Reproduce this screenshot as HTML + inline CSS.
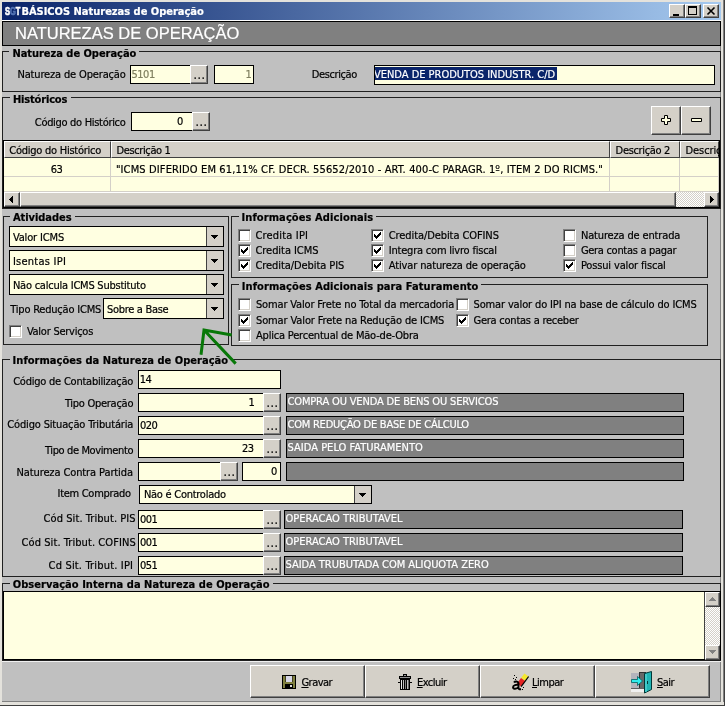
<!DOCTYPE html>
<html><head><meta charset="utf-8"><title>BÁSICOS Naturezas de Operação</title>
<style>
*{box-sizing:border-box;margin:0;padding:0}
html,body{width:725px;height:706px;overflow:hidden;background:#c0c0c0}
body{position:relative;will-change:transform;-webkit-text-stroke:0.2px;font-family:"DejaVu Sans Condensed","Liberation Sans",sans-serif;font-size:11px;color:#000;line-height:13px}
.a{position:absolute;white-space:nowrap}
.b{font-weight:bold}
.titlebar{left:2px;top:2px;width:720px;height:18px;background:linear-gradient(90deg,#0a246a,#a6caf0)}
.wl{left:2px;top:20px;width:719px;height:1px;background:#fff}
.band{left:2px;top:21px;width:719px;height:25px;background:#808080;border:1px solid #000}
.bandt{left:15px;top:22px;color:#fff;font-size:16.5px;line-height:22px;font-family:"Liberation Sans",sans-serif}
.gb{border:1px solid #202020}
.gap{background:#c0c0c0}
.inp{background:#ffffe1;border:1px solid #000}
.dis{color:#808060}
.btn{background:#d4d0c8;border:1px solid;border-color:#fff #404040 #404040 #fff;box-shadow:inset -1px -1px 0 #808080;text-align:center}
.eb{line-height:19px;font-size:12px;letter-spacing:0.57px;padding-left:1px}
.ro{background:#808080;border:1px solid #000}
.cb{background:#fff;border:1px solid;border-color:#808080 #fff #fff #808080;box-shadow:inset 1px 1px 0 #404040,inset -1px -1px 0 #d4d0c8}
.cb svg{position:absolute;left:2px;top:2px}
.combo{background:#ffffe1;border:1px solid #000}
.dd{position:absolute;right:0;top:0;bottom:0;width:17px;background:#d4d0c8;border-left:1px solid #404040}
.dd svg{position:absolute;left:4px;top:50%;margin-top:-2px}
.sel{position:absolute;background:#0a246a}
.grid{background:#ffffe1;border:1px solid #000}
.gh{background:#d4d0c8;border:1px solid;border-color:#fff #404040 #404040 #fff}
.gc{border-right:1px solid #d4d0c8;border-bottom:1px solid #d4d0c8}
.track{background:#e9e7e3 repeating-conic-gradient(#fff 0% 25%,#d4d0c8 0% 50%) 0 0/2px 2px}
.ta{background:#ffffe1;border:1px solid #000}
.wb{width:16px;height:14px}
.arr{position:absolute;left:3px;top:4px}
</style></head><body>
<div class="a titlebar"></div>
<div class="a b" style="left:5px;top:5px;color:#fff;font-family:'Liberation Sans',sans-serif;font-size:11px;line-height:13px;transform:scaleX(0.68);transform-origin:0 0;-webkit-text-stroke:0.7px #fff">S<span style="color:#5474b4;-webkit-text-stroke:0.7px #5474b4">G</span>T</div>
<div class="a wl"></div>
<div class="a b" style="left:21.4px;top:5px;letter-spacing:-0.01px;color:#fff">BÁSICOS Naturezas de Operação</div>
<div class="a btn wb" style="left:669px;top:4px"><i style="position:absolute;left:3px;top:9px;width:6px;height:2px;background:#000"></i></div>
<div class="a btn wb" style="left:685px;top:4px"><i style="position:absolute;left:2px;top:1px;width:9px;height:9px;border:1px solid #000;border-top-width:2px"></i></div>
<div class="a btn wb" style="left:703px;top:4px"><svg width="14" height="12" style="position:absolute;left:0;top:0"><path d="M3.5 2.5l7 7M10.5 2.5l-7 7" stroke="#000" stroke-width="1.6" fill="none"/></svg></div>
<div class="a band"></div>
<div class="a bandt">NATUREZAS DE OPERAÇÃO</div>

<!-- Natureza de Operação -->
<div class="a gb" style="left:2px;top:51px;width:719px;height:41px"></div>
<div class="a gap" style="left:9px;top:51px;width:130px;height:1px"></div>
<div class="a b" style="left:12.4px;top:47px;letter-spacing:-0.03px">Natureza de Operação</div>
<div class="a" style="left:17.4px;top:68px;letter-spacing:-0.15px">Natureza de Operação</div>
<div class="a inp" style="left:130px;top:65px;width:61px;height:19px"></div>
<div class="a dis" style="left:131.5px;top:68px;letter-spacing:-0.50px">5101</div>
<div class="a btn eb" style="left:190px;top:65px;width:18px;height:19px">...</div>
<div class="a inp" style="left:214px;top:65px;width:40px;height:19px"></div>
<div class="a dis" style="left:245.5px;top:68px;letter-spacing:-0.10px">1</div>
<div class="a" style="left:311.7px;top:68px;letter-spacing:-0.38px">Descrição</div>
<div class="a inp" style="left:374px;top:65px;width:341px;height:20px"><i class="sel" style="left:0;top:1px;width:182px;height:13px"></i></div>
<div class="a" style="left:375px;top:66px;width:339px;height:18px;overflow:hidden"><div class="a" style="left:-1.0px;top:2px;letter-spacing:-0.02px;color:#fff">VENDA DE PRODUTOS INDUSTR. C/D</div>
</div>

<!-- Históricos -->
<div class="a gb" style="left:2px;top:97px;width:719px;height:112px"></div>
<div class="a gap" style="left:10px;top:97px;width:61px;height:1px"></div>
<div class="a b" style="left:12.9px;top:93px;letter-spacing:-0.16px">Históricos</div>
<div class="a" style="left:34.8px;top:116px;letter-spacing:-0.31px">Código do Histórico</div>
<div class="a inp" style="left:131px;top:112px;width:62px;height:19px"></div>
<div class="a" style="left:177.0px;top:115px;letter-spacing:-0.10px">0</div>
<div class="a btn eb" style="left:192px;top:112px;width:18px;height:19px">...</div>
<div class="a btn" style="left:651px;top:106px;width:30px;height:29px"><svg width="28" height="27" style="position:absolute;left:0;top:0"><path d="M12.5 8.5h3v3h3v3h-3v3h-3v-3h-3v-3h3z" fill="#ffffe1" stroke="#000" stroke-width="1"/></svg></div>
<div class="a btn" style="left:681px;top:106px;width:30px;height:29px"><svg width="28" height="27" style="position:absolute;left:0;top:0"><path d="M9.5 11.5h10v3h-10z" fill="#ffffe1" stroke="#000" stroke-width="1"/></svg></div>
<div class="a grid" style="left:3px;top:140px;width:717px;height:68px"></div>
<div class="a gh" style="left:4px;top:141px;width:107px;height:17px"></div>
<div class="a gc" style="left:4px;top:158px;width:107px;height:19px"></div>
<div class="a gc" style="left:4px;top:177px;width:107px;height:15px"></div>
<div class="a gh" style="left:111px;top:141px;width:499px;height:17px"></div>
<div class="a gc" style="left:111px;top:158px;width:499px;height:19px"></div>
<div class="a gc" style="left:111px;top:177px;width:499px;height:15px"></div>
<div class="a gh" style="left:610px;top:141px;width:70px;height:17px"></div>
<div class="a gc" style="left:610px;top:158px;width:70px;height:19px"></div>
<div class="a gc" style="left:610px;top:177px;width:70px;height:15px"></div>
<div class="a gh" style="left:680px;top:141px;width:39px;height:17px"></div>
<div class="a gc" style="left:680px;top:158px;width:39px;height:19px"></div>
<div class="a gc" style="left:680px;top:177px;width:39px;height:15px"></div>
<div class="a" style="left:9.3px;top:144px;letter-spacing:-0.25px">Código do Histórico</div>
<div class="a" style="left:116.5px;top:144px;letter-spacing:-0.38px">Descrição 1</div>
<div class="a" style="left:615.6px;top:144px;letter-spacing:-0.34px">Descrição 2</div>
<div class="a" style="left:681px;top:142px;width:38px;height:15px;overflow:hidden"><div class="a" style="left:4.6px;top:2px;letter-spacing:-0.10px">Descriç</div>
</div>
<div class="a" style="left:50.7px;top:163px;letter-spacing:-0.50px">63</div>
<div class="a" style="left:115.9px;top:163px;letter-spacing:0.13px">"ICMS DIFERIDO EM 61,11% CF. DECR. 55652/2010 - ART. 400-C PARAGR. 1º, ITEM 2 DO RICMS."</div>
<div class="a track" style="left:4px;top:192px;width:715px;height:15px"></div>
<div class="a btn" style="left:4px;top:192px;width:16px;height:15px"><svg width="4" height="7" shape-rendering="crispEdges" style="position:absolute;left:4px;top:3px"><path d="M0 3h1v1h-1zM1 2h1v3h-1zM2 1h1v5h-1zM3 0h1v7h-1z"/></svg></div>
<div class="a btn" style="left:20px;top:192px;width:656px;height:15px"></div>
<div class="a btn" style="left:704px;top:192px;width:15px;height:15px"><svg width="4" height="7" shape-rendering="crispEdges" style="position:absolute;left:5px;top:3px"><path d="M0 0h1v7h-1zM1 1h1v5h-1zM2 2h1v3h-1zM3 3h1v1h-1z"/></svg></div>

<!-- Atividades -->
<div class="a gb" style="left:3px;top:216px;width:226px;height:129px"></div>
<div class="a gap" style="left:10px;top:216px;width:65px;height:1px"></div>
<div class="a b" style="left:12.9px;top:211px;letter-spacing:-0.04px">Atividades</div>
<div class="a combo" style="left:9px;top:226px;width:215px;height:21px"><i class="dd"><svg width="7" height="4" shape-rendering="crispEdges"><path d="M0 0h7v1h-7zM1 1h5v1h-5zM2 2h3v1h-3zM3 3h1v1h-1z"/></svg></i></div>
<div class="a" style="left:12.9px;top:231px;letter-spacing:-0.14px">Valor ICMS</div>
<div class="a combo" style="left:9px;top:250px;width:215px;height:21px"><i class="dd"><svg width="7" height="4" shape-rendering="crispEdges"><path d="M0 0h7v1h-7zM1 1h5v1h-5zM2 2h3v1h-3zM3 3h1v1h-1z"/></svg></i></div>
<div class="a" style="left:12.9px;top:255px;letter-spacing:0.25px">Isentas IPI</div>
<div class="a combo" style="left:9px;top:274px;width:215px;height:21px"><i class="dd"><svg width="7" height="4" shape-rendering="crispEdges"><path d="M0 0h7v1h-7zM1 1h5v1h-5zM2 2h3v1h-3zM3 3h1v1h-1z"/></svg></i></div>
<div class="a" style="left:12.9px;top:279px;letter-spacing:-0.23px">Não calcula ICMS Substituto</div>
<div class="a" style="left:10.3px;top:303px;letter-spacing:-0.21px">Tipo Redução ICMS</div>
<div class="a combo" style="left:103px;top:298px;width:121px;height:21px"><i class="dd"><svg width="7" height="4" shape-rendering="crispEdges"><path d="M0 0h7v1h-7zM1 1h5v1h-5zM2 2h3v1h-3zM3 3h1v1h-1z"/></svg></i></div>
<div class="a" style="left:107.0px;top:303px;letter-spacing:-0.31px">Sobre a Base</div>
<div class="a cb" style="left:9px;top:325px;width:13px;height:13px"></div>
<div class="a" style="left:26.9px;top:325px;letter-spacing:-0.25px">Valor Serviços</div>

<!-- Informações Adicionais -->
<div class="a gb" style="left:231px;top:216px;width:477px;height:62px"></div>
<div class="a gap" style="left:239px;top:216px;width:137px;height:1px"></div>
<div class="a b" style="left:241.5px;top:211px;letter-spacing:0.10px">Informações Adicionais</div>
<div class="a cb" style="left:238px;top:229px;width:13px;height:13px"></div>
<div class="a" style="left:255.5px;top:229px;letter-spacing:0.17px">Credita IPI</div>
<div class="a cb" style="left:238px;top:244px;width:13px;height:13px"><svg width="7" height="7" shape-rendering="crispEdges"><path d="M0 2h1v3h-1zM1 3h1v3h-1zM2 4h1v3h-1zM3 3h1v3h-1zM4 2h1v3h-1zM5 1h1v3h-1zM6 0h1v3h-1z"/></svg></div>
<div class="a" style="left:255.5px;top:244px;letter-spacing:-0.06px">Credita ICMS</div>
<div class="a cb" style="left:238px;top:259px;width:13px;height:13px"><svg width="7" height="7" shape-rendering="crispEdges"><path d="M0 2h1v3h-1zM1 3h1v3h-1zM2 4h1v3h-1zM3 3h1v3h-1zM4 2h1v3h-1zM5 1h1v3h-1zM6 0h1v3h-1z"/></svg></div>
<div class="a" style="left:255.5px;top:259px;letter-spacing:-0.08px">Credita/Debita PIS</div>
<div class="a cb" style="left:371px;top:229px;width:13px;height:13px"><svg width="7" height="7" shape-rendering="crispEdges"><path d="M0 2h1v3h-1zM1 3h1v3h-1zM2 4h1v3h-1zM3 3h1v3h-1zM4 2h1v3h-1zM5 1h1v3h-1zM6 0h1v3h-1z"/></svg></div>
<div class="a" style="left:388.8px;top:229px;letter-spacing:-0.09px">Credita/Debita COFINS</div>
<div class="a cb" style="left:371px;top:244px;width:13px;height:13px"><svg width="7" height="7" shape-rendering="crispEdges"><path d="M0 2h1v3h-1zM1 3h1v3h-1zM2 4h1v3h-1zM3 3h1v3h-1zM4 2h1v3h-1zM5 1h1v3h-1zM6 0h1v3h-1z"/></svg></div>
<div class="a" style="left:388.8px;top:244px;letter-spacing:-0.21px">Integra com livro fiscal</div>
<div class="a cb" style="left:371px;top:259px;width:13px;height:13px"><svg width="7" height="7" shape-rendering="crispEdges"><path d="M0 2h1v3h-1zM1 3h1v3h-1zM2 4h1v3h-1zM3 3h1v3h-1zM4 2h1v3h-1zM5 1h1v3h-1zM6 0h1v3h-1z"/></svg></div>
<div class="a" style="left:388.8px;top:259px;letter-spacing:-0.14px">Ativar natureza de operação</div>
<div class="a cb" style="left:563px;top:229px;width:13px;height:13px"></div>
<div class="a" style="left:580.9px;top:229px;letter-spacing:-0.15px">Natureza de entrada</div>
<div class="a cb" style="left:563px;top:244px;width:13px;height:13px"></div>
<div class="a" style="left:580.9px;top:244px;letter-spacing:-0.29px">Gera contas a pagar</div>
<div class="a cb" style="left:563px;top:259px;width:13px;height:13px"><svg width="7" height="7" shape-rendering="crispEdges"><path d="M0 2h1v3h-1zM1 3h1v3h-1zM2 4h1v3h-1zM3 3h1v3h-1zM4 2h1v3h-1zM5 1h1v3h-1zM6 0h1v3h-1z"/></svg></div>
<div class="a" style="left:580.9px;top:259px;letter-spacing:-0.15px">Possui valor fiscal</div>

<!-- Informações Adicionais para Faturamento -->
<div class="a gb" style="left:231px;top:284px;width:477px;height:62px"></div>
<div class="a gap" style="left:239px;top:284px;width:242px;height:1px"></div>
<div class="a b" style="left:241.8px;top:280px;letter-spacing:0.08px">Informações Adicionais para Faturamento</div>
<div class="a cb" style="left:238px;top:298px;width:13px;height:13px"></div>
<div class="a" style="left:256.0px;top:298px;letter-spacing:-0.16px">Somar Valor Frete no Total da mercadoria</div>
<div class="a cb" style="left:238px;top:314px;width:13px;height:13px"><svg width="7" height="7" shape-rendering="crispEdges"><path d="M0 2h1v3h-1zM1 3h1v3h-1zM2 4h1v3h-1zM3 3h1v3h-1zM4 2h1v3h-1zM5 1h1v3h-1zM6 0h1v3h-1z"/></svg></div>
<div class="a" style="left:256.0px;top:314px;letter-spacing:-0.12px">Somar Valor Frete na Redução de ICMS</div>
<div class="a cb" style="left:238px;top:329px;width:13px;height:13px"></div>
<div class="a" style="left:256.0px;top:329px;letter-spacing:-0.20px">Aplica Percentual de Mão-de-Obra</div>
<div class="a cb" style="left:456px;top:298px;width:13px;height:13px"></div>
<div class="a" style="left:473.5px;top:298px;letter-spacing:-0.14px">Somar valor do IPI na base de cálculo do ICMS</div>
<div class="a cb" style="left:456px;top:314px;width:13px;height:13px"><svg width="7" height="7" shape-rendering="crispEdges"><path d="M0 2h1v3h-1zM1 3h1v3h-1zM2 4h1v3h-1zM3 3h1v3h-1zM4 2h1v3h-1zM5 1h1v3h-1zM6 0h1v3h-1z"/></svg></div>
<div class="a" style="left:473.5px;top:314px;letter-spacing:-0.24px">Gera contas a receber</div>

<!-- Informações da Natureza de Operação -->
<div class="a gb" style="left:2px;top:359px;width:719px;height:218px"></div>
<div class="a gap" style="left:10px;top:359px;width:221px;height:1px"></div>
<div class="a b" style="left:12.6px;top:354px;letter-spacing:0.04px">Informações da Natureza de Operação</div>
<svg class="a" style="left:190px;top:320px" width="60" height="50"><path d="M41.7 15L14 10L11 34.7M14 10L45.7 43.6" fill="none" stroke="#087808" stroke-width="3" stroke-linejoin="miter"/></svg>
<div class="a" style="left:13.2px;top:375px;letter-spacing:-0.23px">Código de Contabilização</div>
<div class="a inp" style="left:138px;top:370px;width:143px;height:19px"></div>
<div class="a" style="left:139.7px;top:373px;letter-spacing:-0.50px">14</div>
<div class="a" style="left:64.9px;top:397px;letter-spacing:-0.27px">Tipo Operação</div>
<div class="a inp" style="left:138px;top:393px;width:126px;height:19px"></div>
<div class="a btn eb" style="left:263px;top:393px;width:18px;height:19px">...</div>
<div class="a" style="left:248.5px;top:396px;letter-spacing:-0.10px">1</div>
<div class="a ro" style="left:286px;top:393px;width:398px;height:19px"></div>
<div class="a" style="left:287.5px;top:395px;letter-spacing:-0.15px;color:#fff">COMPRA OU VENDA DE BENS OU SERVICOS</div>
<div class="a" style="left:7.3px;top:418px;letter-spacing:-0.16px">Código Situação Tributária</div>
<div class="a inp" style="left:138px;top:416px;width:126px;height:19px"></div>
<div class="a btn eb" style="left:263px;top:416px;width:18px;height:19px">...</div>
<div class="a" style="left:140.0px;top:419px;letter-spacing:-0.50px">020</div>
<div class="a ro" style="left:286px;top:416px;width:398px;height:19px"></div>
<div class="a" style="left:287.5px;top:418px;letter-spacing:-0.23px;color:#fff">COM REDUÇÃO DE BASE DE CÁLCULO</div>
<div class="a" style="left:45.0px;top:444px;letter-spacing:-0.38px">Tipo de Movimento</div>
<div class="a inp" style="left:138px;top:439px;width:126px;height:19px"></div>
<div class="a btn eb" style="left:263px;top:439px;width:18px;height:19px">...</div>
<div class="a" style="left:242.0px;top:442px;letter-spacing:-0.50px">23</div>
<div class="a ro" style="left:286px;top:439px;width:398px;height:19px"></div>
<div class="a" style="left:287.5px;top:441px;letter-spacing:0.02px;color:#fff">SAIDA PELO FATURAMENTO</div>
<div class="a" style="left:16.5px;top:466px;letter-spacing:-0.11px">Natureza Contra Partida</div>
<div class="a inp" style="left:138px;top:462px;width:83px;height:19px"></div>
<div class="a btn eb" style="left:220px;top:462px;width:18px;height:19px">...</div>
<div class="a inp" style="left:242px;top:462px;width:39px;height:19px"></div>
<div class="a" style="left:271.0px;top:465px;letter-spacing:-0.10px">0</div>
<div class="a ro" style="left:286px;top:462px;width:398px;height:19px"></div>
<div class="a" style="left:57.6px;top:487px;letter-spacing:-0.30px">Item Comprado</div>
<div class="a combo" style="left:139px;top:485px;width:233px;height:19px"><i class="dd"><svg width="7" height="4" shape-rendering="crispEdges"><path d="M0 0h7v1h-7zM1 1h5v1h-5zM2 2h3v1h-3zM3 3h1v1h-1z"/></svg></i></div>
<div class="a" style="left:143.9px;top:488px;letter-spacing:-0.26px">Não é Controlado</div>
<div class="a" style="left:43.6px;top:512px;letter-spacing:0.07px">Cód Sit. Tribut. PIS</div>
<div class="a inp" style="left:138px;top:510px;width:126px;height:19px"></div>
<div class="a btn eb" style="left:263px;top:510px;width:18px;height:19px">...</div>
<div class="a" style="left:140.0px;top:513px;letter-spacing:-0.50px">001</div>
<div class="a ro" style="left:284px;top:510px;width:399px;height:19px"></div>
<div class="a" style="left:285.5px;top:512px;letter-spacing:-0.00px;color:#fff">OPERACAO TRIBUTAVEL</div>
<div class="a" style="left:21.6px;top:536px;letter-spacing:0.07px">Cód Sit. Tribut. COFINS</div>
<div class="a inp" style="left:138px;top:533px;width:126px;height:19px"></div>
<div class="a btn eb" style="left:263px;top:533px;width:18px;height:19px">...</div>
<div class="a" style="left:140.0px;top:536px;letter-spacing:-0.50px">001</div>
<div class="a ro" style="left:284px;top:533px;width:399px;height:19px"></div>
<div class="a" style="left:285.5px;top:535px;letter-spacing:-0.00px;color:#fff">OPERACAO TRIBUTAVEL</div>
<div class="a" style="left:48.6px;top:559px;letter-spacing:0.17px">Cd Sit. Tribut. IPI</div>
<div class="a inp" style="left:138px;top:556px;width:126px;height:19px"></div>
<div class="a btn eb" style="left:263px;top:556px;width:18px;height:19px">...</div>
<div class="a" style="left:140.0px;top:559px;letter-spacing:-0.50px">051</div>
<div class="a ro" style="left:284px;top:556px;width:399px;height:19px"></div>
<div class="a" style="left:285.5px;top:558px;letter-spacing:-0.03px;color:#fff">SAIDA TRUBUTADA COM ALIQUOTA ZERO</div>

<!-- Observação Interna -->
<div class="a gb" style="left:2px;top:583px;width:719px;height:78px"></div>
<div class="a gap" style="left:10px;top:583px;width:263px;height:1px"></div>
<div class="a b" style="left:12.7px;top:578px;letter-spacing:0.05px">Observação Interna da Natureza de Operação</div>
<div class="a wl2" style="left:2px;top:661px;width:719px;height:1px;background:#f0f0f0"></div>
<div class="a ta" style="left:3px;top:591px;width:718px;height:69px"></div>
<div class="a track" style="left:705px;top:592px;width:15px;height:68px"></div>
<div class="a" style="left:704px;top:592px;width:1px;height:67px;background:#404040"></div>
<div class="a btn" style="left:705px;top:592px;width:15px;height:15px"><svg class="arr" width="7" height="4" shape-rendering="crispEdges"><path fill="#808080" d="M3 0h1v1h-1zM2 1h3v1h-3zM1 2h5v1h-5zM0 3h7v1h-7z"/></svg></div>
<div class="a btn" style="left:705px;top:645px;width:15px;height:15px"><svg class="arr" width="7" height="4" shape-rendering="crispEdges"><path fill="#808080" d="M0 0h7v1h-7zM1 1h5v1h-5zM2 2h3v1h-3zM3 3h1v1h-1z"/></svg></div>

<!-- buttons -->
<div class="a btn" style="left:250px;top:665px;width:115px;height:33px"></div>
<div class="a btn" style="left:365px;top:665px;width:115px;height:33px"></div>
<div class="a btn" style="left:480px;top:665px;width:115px;height:33px"></div>
<div class="a btn" style="left:595px;top:665px;width:115px;height:33px"></div>
<svg class="a" style="left:282px;top:675px" width="14" height="14" shape-rendering="crispEdges"><rect width="14" height="14" fill="#000"/><rect x="1" y="1" width="12" height="12" fill="#808040"/><rect x="3" y="1" width="8" height="6" fill="#d8d8e8"/><rect x="3" y="1" width="1" height="6" fill="#404020"/><rect x="10" y="1" width="1" height="6" fill="#404020"/><rect x="3" y="9" width="8" height="4" fill="#000"/><rect x="8" y="10" width="2" height="2" fill="#e0e0e0"/></svg>
<svg class="a" style="left:398px;top:674px" width="14" height="16" shape-rendering="crispEdges"><rect x="5" y="0" width="4" height="2" fill="#000"/><rect x="6" y="1" width="2" height="1" fill="#a0a0a0"/><rect x="1" y="2" width="12" height="3" fill="#000"/><rect x="2" y="3" width="10" height="1" fill="#909090"/><rect x="2" y="5" width="10" height="11" fill="#000"/><rect x="3" y="6" width="1" height="9" fill="#e8e8e8"/><rect x="5" y="6" width="1" height="9" fill="#c0c0c0"/><rect x="7" y="6" width="1" height="9" fill="#808080"/><rect x="9" y="6" width="1" height="9" fill="#c0c0c0"/><rect x="10" y="6" width="1" height="9" fill="#606060"/><rect x="0" y="8" width="2" height="1" fill="#000"/><rect x="12" y="8" width="2" height="1" fill="#000"/></svg>
<svg class="a" style="left:511px;top:672px" width="18" height="19"><path d="M13.400 1.440L17.600 4.560L14.200 9.060L10 5.940z" fill="#f4e830"/><path d="M10 5.940L14.200 9.060L10.100 14.560L5.900 11.440z" fill="#e42424"/><path d="M17.600 4.560L10.100 14.560" stroke="#000" stroke-width="1.200" fill="none"/><path d="M3 10.500c1-1.500 4-1.500 4.500 .5v5c0 1 1 1.500 2.500 1M7.500 13c-2-.5-5.500 0-5.500 2.200c0 2.200 4 2 5.500-.2" fill="none" stroke="#000" stroke-width="1.900"/><rect x="3" y="3" width="1" height="1" fill="#000"/><rect x="5" y="5" width="1" height="1" fill="#000"/><rect x="2" y="6" width="1" height="1" fill="#000"/><rect x="4" y="7" width="1" height="1" fill="#000"/><rect x="12" y="15" width="1" height="1" fill="#000"/><rect x="11" y="17" width="1" height="1" fill="#000"/></svg>
<svg class="a" style="left:630px;top:671px" width="23" height="23"><rect x="1" y="2" width="10" height="15" fill="#b4b4bc"/><rect x="9.500" y="1.500" width="6" height="16" fill="#686868" stroke="#303030" stroke-width="1"/><path d="M1 18h13v3h-13z" fill="#f0f0f0"/><path d="M1 17.500h13" stroke="#606060" stroke-width="1"/><path d="M21.500 .500l-7 2v19.500l7-3.500z" fill="#20b4b4" stroke="#003838" stroke-width="1"/><path d="M16 3v18" stroke="#60e0e0" stroke-width="1"/><rect x="17" y="10" width="1" height="3" fill="#003838"/><path d="M1.500 8.500h6v-3l5 4.500l-5 4.500v-3h-6z" fill="#30ecec" stroke="#006060" stroke-width="0.800"/></svg>
<div class="a" style="left:301.4px;top:676px;letter-spacing:-0.50px"><u>G</u>ravar</div>
<div class="a" style="left:416.9px;top:676px;letter-spacing:-0.50px"><u>E</u>xcluir</div>
<div class="a" style="left:532.0px;top:676px;letter-spacing:-0.50px"><u>L</u>impar</div>
<div class="a" style="left:657.0px;top:676px;letter-spacing:-0.50px"><u>S</u>air</div>

<!-- window frame -->
<div class="a" style="left:0;top:0;width:2px;height:706px;background:#e4e2dc"></div>
<div class="a" style="left:0;top:0;width:725px;height:2px;background:#e4e2dc"></div>
<div class="a" style="left:720px;top:20px;width:1px;height:682px;background:#808080;z-index:-1"></div>
<div class="a" style="left:2px;top:701px;width:719px;height:1px;background:#808080"></div>
<div class="a" style="left:721px;top:0;width:2px;height:705px;background:#e4e2dc"></div>
<div class="a" style="left:723px;top:0;width:1px;height:705px;background:#808080"></div>
<div class="a" style="left:0;top:702px;width:724px;height:3px;background:#e4e2dc"></div>
<div class="a" style="left:724px;top:0;width:1px;height:706px;background:#404040"></div>
<div class="a" style="left:0;top:705px;width:725px;height:1px;background:#404040"></div>
</body></html>
